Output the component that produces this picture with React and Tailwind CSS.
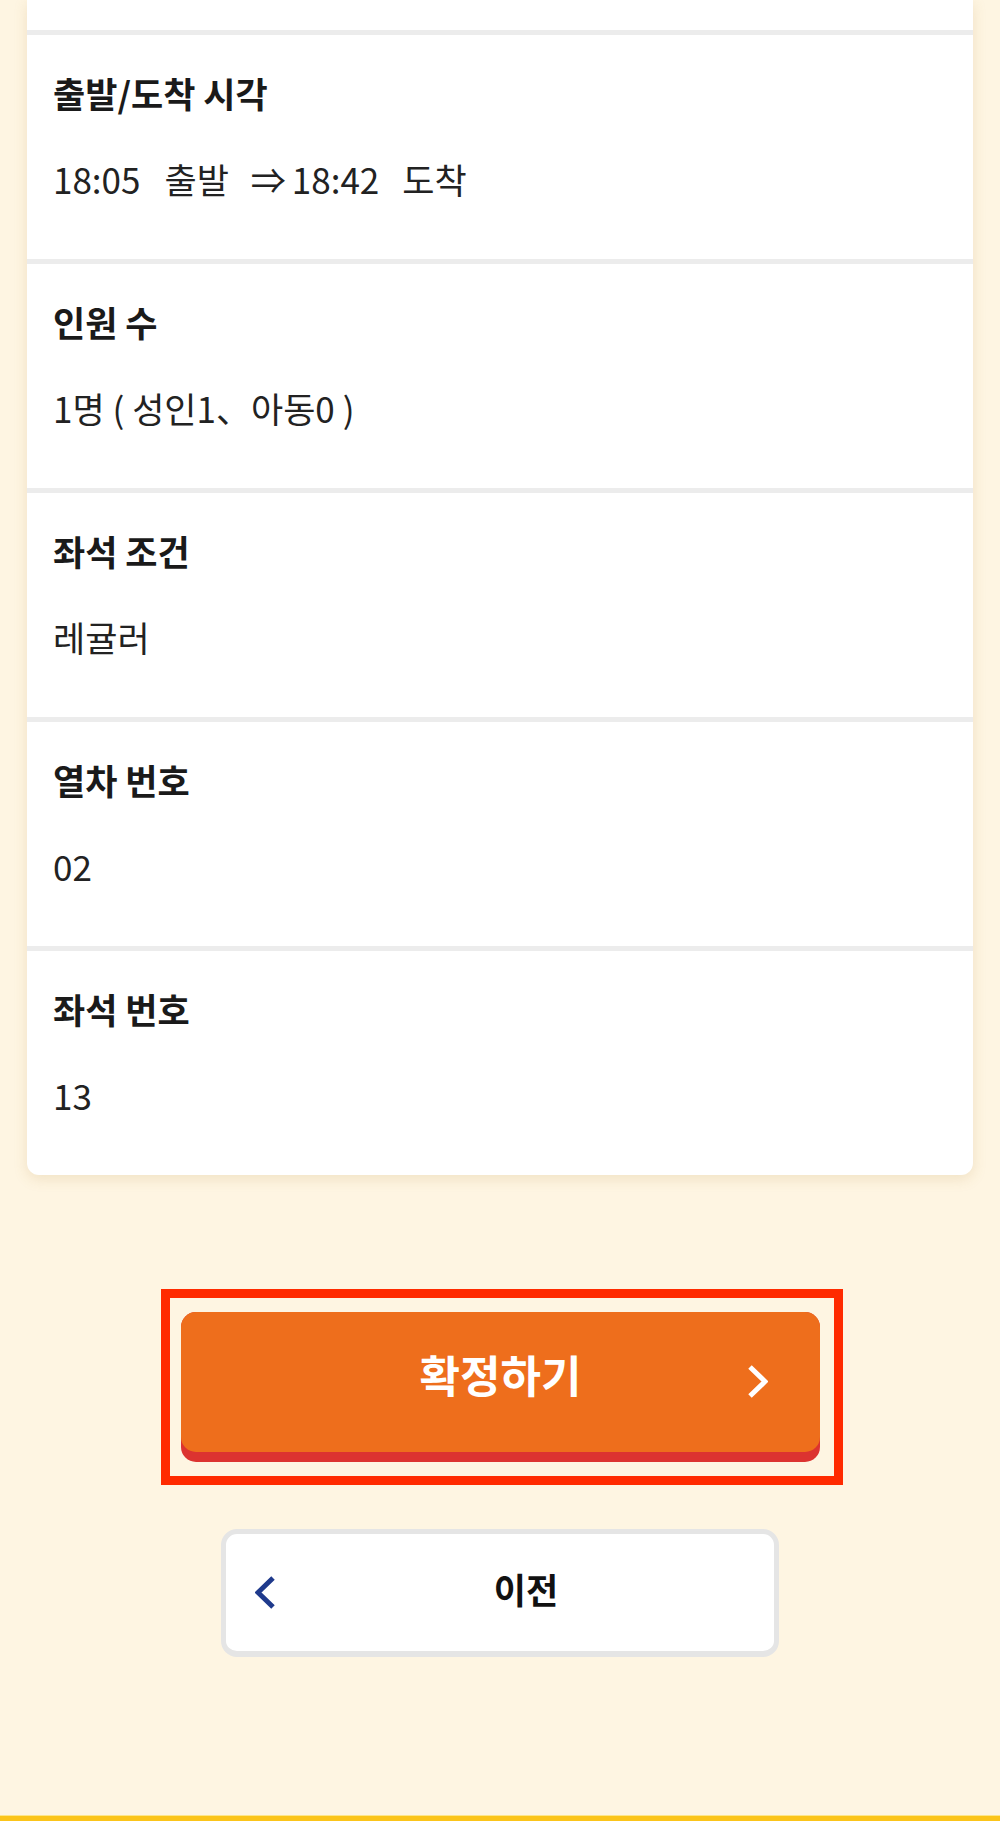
import { ChevronLeft } from "lucide-react";

const font = { fontFamily: '"Noto Sans CJK KR", "Noto Sans", sans-serif' };

const rows = [
  {
    label: "출발/도착 시각",
    value: (
      <>
        <span>18:05</span>
        <span className="ml-[24px]">출발</span>
        <span className="ml-[22px]">⇒</span>
        <span className="ml-[6px]">18:42</span>
        <span className="ml-[23px]">도착</span>
      </>
    ),
  },
  { label: "인원 수", value: "1명 ( 성인1、아동0 )" },
  { label: "좌석 조건", value: "레귤러" },
  { label: "열차 번호", value: "02" },
  { label: "좌석 번호", value: "13" },
];

function InfoRow({ label, value }) {
  return (
    <div className="border-t-[5px] border-[#ececec] h-[229px] pl-[26px] pt-[36px]">
      <h3 className="text-[35px] leading-[44px] font-bold text-[#1a1a1a]">{label}</h3>
      <p className="mt-[42px] text-[35px] leading-[44px] text-[#222222]">{value}</p>
    </div>
  );
}

function ChevronRight() {
  return (
    <svg width="20" height="33" viewBox="0 0 20 33" fill="none">
      <polyline points="2,2 17,16.5 2,31" stroke="#ffffff" strokeWidth="5" strokeLinejoin="miter" />
    </svg>
  );
}

function ChevronBack() {
  return (
    <svg width="20" height="33" viewBox="0 0 20 33" fill="none">
      <polyline points="18,2 3,16.5 18,31" stroke="#1f3a8c" strokeWidth="5" strokeLinejoin="miter" />
    </svg>
  );
}

export default function App() {
  return (
    <div className="min-h-[1821px] bg-[#fef5e2] flex flex-col" style={font}>
      <div className="px-[27px]">
        <div className="bg-white rounded-b-[12px] shadow-[0_4px_14px_rgba(180,140,60,0.18)] overflow-hidden">
          <div className="h-[30px]" />
          {rows.map((r) => (
            <InfoRow key={r.label} label={r.label} value={r.value} />
          ))}
        </div>
      </div>

      <div className="mt-[114px] ml-[161px] w-[682px] border-[9px] border-[#ff2a00] pt-[14px] pb-[14px] pl-[11px] pr-[14px]">
        <button className="block w-full bg-[#dc3330] rounded-[15px] pb-[10px]">
          <div className="relative h-[140px] rounded-[15px] bg-[#ee6e1c] flex items-center justify-center pb-[16px]">
            <span className="text-[44px] font-bold text-white leading-none">확정하기</span>
            <span className="absolute right-[52px] top-[53px]">
              <ChevronRight />
            </span>
          </div>
        </button>
      </div>

      <div className="mt-[44px] mx-auto w-[558px]">
        <button className="relative w-full h-[128px] bg-white border-[5px] border-b-[6px] border-[#e5e5e5] rounded-[16px] flex items-center justify-center pl-[52px] pb-[8px]">
          <span className="absolute left-[29px] top-[42px]">
            <ChevronBack />
          </span>
          <span className="text-[35px] font-bold text-[#111111] leading-none">이전</span>
        </button>
      </div>

      <div className="flex-1" />
      <div className="h-[6px] border-t border-[#fde68a] bg-[#fbc41a]" />
    </div>
  );
}
